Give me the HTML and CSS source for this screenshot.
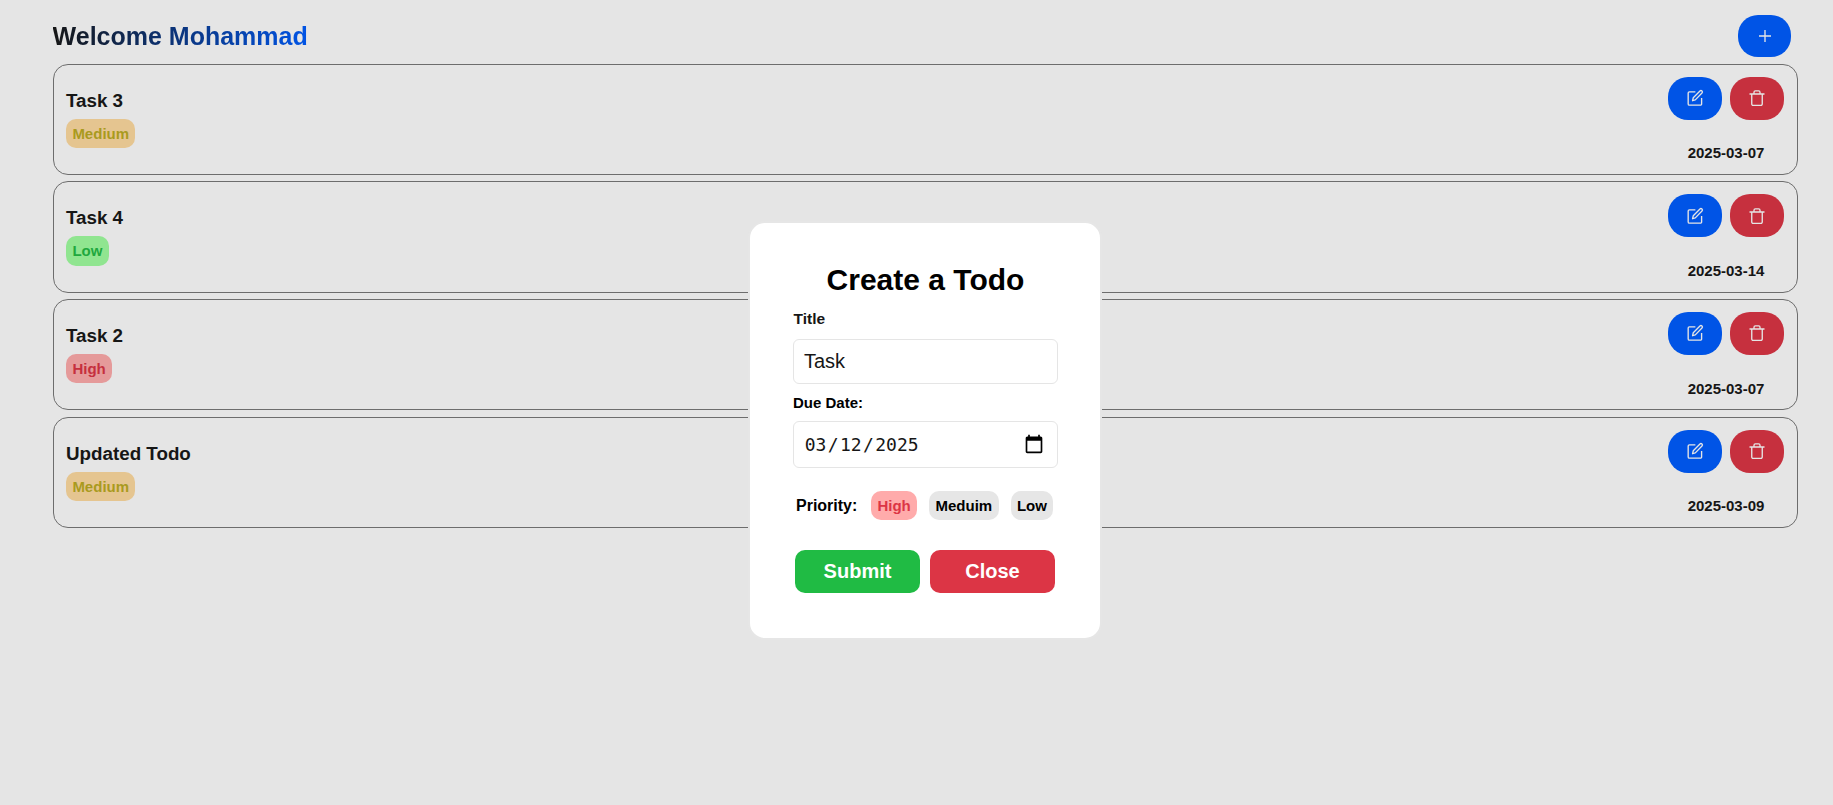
FILE: index.html
```
<!DOCTYPE html>
<html lang="en">
<head>
<meta charset="utf-8">
<title>Todos</title>
<link rel="stylesheet" href="styles.css">
</head>
<body>
<svg width="0" height="0" class="defs">
  <symbol id="edit" viewBox="0 0 24 24"><path d="M12.500 3.800H4.500A1.600 1.600 0 0 0 2.900 5.400V19.900A1.600 1.600 0 0 0 4.500 21.500H19.200A1.600 1.600 0 0 0 20.800 19.900V12"/><path d="M8.800 15.600L9.700 11.700 18.600 2.700A1.900 1.900 0 0 1 21.300 5.400L12.400 14.500z"/></symbol>
  <symbol id="trash" viewBox="0 0 24 24"><path d="M2 6.700H22M5 6.700V20A1.800 1.800 0 0 0 6.800 21.800H17.200A1.800 1.800 0 0 0 19 20V6.700M8 6.700V4.300A1.800 1.800 0 0 1 9.800 2.500H14.200A1.800 1.800 0 0 1 16 4.300V6.700"/></symbol>
  <symbol id="plus" viewBox="0 0 24 24"><path d="M12 4V20M4 12H20"/></symbol>
</svg>
<main class="page">
  <header class="header">
    <h1 class="welcome">Welcome Mohammad</h1>
    <button class="round add"><svg class="icon"><use href="#plus"/></svg></button>
  </header>
  <section class="list">
    <article class="card">
      <div class="info"><h3 class="name">Task 3</h3><span class="tag medium">Medium</span></div>
      <div class="side"><div class="actions"><button class="round"><svg class="icon"><use href="#edit"/></svg></button><button class="round delete"><svg class="icon"><use href="#trash"/></svg></button></div><span class="date">2025-03-07</span></div>
    </article>
    <article class="card">
      <div class="info"><h3 class="name">Task 4</h3><span class="tag low">Low</span></div>
      <div class="side"><div class="actions"><button class="round"><svg class="icon"><use href="#edit"/></svg></button><button class="round delete"><svg class="icon"><use href="#trash"/></svg></button></div><span class="date">2025-03-14</span></div>
    </article>
    <article class="card">
      <div class="info"><h3 class="name">Task 2</h3><span class="tag high">High</span></div>
      <div class="side"><div class="actions"><button class="round"><svg class="icon"><use href="#edit"/></svg></button><button class="round delete"><svg class="icon"><use href="#trash"/></svg></button></div><span class="date">2025-03-07</span></div>
    </article>
    <article class="card">
      <div class="info"><h3 class="name">Updated Todo</h3><span class="tag medium">Medium</span></div>
      <div class="side"><div class="actions"><button class="round"><svg class="icon"><use href="#edit"/></svg></button><button class="round delete"><svg class="icon"><use href="#trash"/></svg></button></div><span class="date">2025-03-09</span></div>
    </article>
  </section>
</main>
<div class="modal">
  <h2 class="modal-title">Create a Todo</h2>
  <span class="label">Title</span>
  <div class="field">Task</div>
  <span class="label due">Due Date:</span>
  <div class="field datefield">
    <span class="digits"><span>03</span><span>/</span><span>12</span><span>/</span><span>2025</span></span>
    <svg class="calendar" viewBox="0 0 24 24"><path d="M20 3h-1V1h-2v2H7V1H5v2H4c-1.100 0-2 .9-2 2v16c0 1.100.9 2 2 2h16c1.100 0 2-.9 2-2V5c0-1.100-.9-2-2-2zm0 18H4V8h16v13z"/></svg>
  </div>
  <div class="priority"><span class="priority-label">Priority:</span><span class="tag picked">High</span><span class="tag option">Meduim</span><span class="tag option">Low</span></div>
  <div class="buttons"><button class="btn submit">Submit</button><button class="btn close">Close</button></div>
</div>
</body>
</html>
```
FILE: styles.css
```
* { box-sizing: border-box; }
body { margin: 0; height: 805px; overflow: hidden; background: #e5e5e5; color: #161616; font-family: "Liberation Sans", Arial, sans-serif; }
h1, h2, h3 { margin: 0; }
button { border: 0; padding: 0; font-family: inherit; }
.defs { position: absolute; }
.page { padding: 15px 35px 0 52.600px; }
.header { display: flex; justify-content: space-between; height: 48.600px; padding-right: 7px; }
.welcome { height: 42px; font-size: 25px; line-height: 42px; background: linear-gradient(90deg, #161616, #0054e6); background-clip: text; -webkit-background-clip: text; color: transparent; }
.round { display: flex; align-items: center; justify-content: center; width: 54px; height: 43px; border-radius: 20px; background: #0054e6; color: #e5e5e5; }
.round.add { width: 53px; height: 42px; }
.round.delete { background: #c6303e; }
.icon { width: 18px; height: 18px; fill: none; stroke: currentColor; stroke-width: 1.8; stroke-linejoin: round; }
.list { display: flex; flex-direction: column; gap: 6.400px; }
.card { display: flex; justify-content: space-between; height: 111.300px; border: 1px solid #6d6d6d; border-radius: 15px; padding: 12px 13px 12.500px 12.400px; }
.info { display: flex; flex-direction: column; align-items: flex-start; padding-top: 12px; }
.name { font-size: 18.800px; line-height: 23px; height: 30px; }
.tag { height: 29.500px; padding: 0 6.400px; border-radius: 10px; font-size: 15px; font-weight: bold; line-height: 30px; }
.medium { background: #e5c590; color: #a99a1e; }
.low { background: #90e590; color: #20a83e; }
.high { background: #e59a9a; color: #c6303e; }
.side { display: flex; flex-direction: column; align-items: center; justify-content: space-between; }
.actions { display: flex; gap: 8px; }
.date { font-size: 15px; font-weight: bold; line-height: 17px; }
.modal { position: absolute; left: 748px; top: 221px; width: 354px; height: 419px; display: flex; flex-direction: column; padding: 40px 42px 0 43px; border: 2px solid #e6e6e6; border-radius: 17px; background: #fff; }
.modal-title { height: 36px; color: #000; font-size: 30px; line-height: 34px; text-align: center; }
.label { margin-top: 11px; height: 29px; padding-left: .5px; font-size: 15.500px; line-height: 18px; font-weight: bold; }
.label.due { margin-top: 10px; height: 27px; padding-left: 0; font-size: 15px; color: #000; }
.field { display: flex; align-items: center; width: 265px; height: 45px; border: 1px solid #e5e5e5; border-radius: 6px; padding: 0 13px 0 10px; font-size: 20px; }
.datefield { height: 47px; justify-content: space-between; padding-bottom: 1px; }
.digits { display: flex; font-family: "DejaVu Sans Mono", monospace; font-size: 18px; }
.digits span { padding: 0 .7px; }
.calendar { width: 20px; height: 20px; fill: #000; }
.priority { display: flex; align-items: center; gap: 12px; margin-top: 22px; padding-left: 3px; height: 31px; color: #000; }
.priority-label { width: 63px; font-size: 16px; font-weight: bold; }
.picked { background: #ffabab; color: #dc3545; }
.option { background: #e6e6e6; }
.buttons { display: flex; gap: 10px; margin-top: 29px; padding-left: 2px; }
.btn { width: 125px; height: 43px; border-radius: 10px; color: #fff; font-size: 20px; font-weight: bold; }
.submit { background: #20bb44; }
.close { background: #dc3545; }
```
